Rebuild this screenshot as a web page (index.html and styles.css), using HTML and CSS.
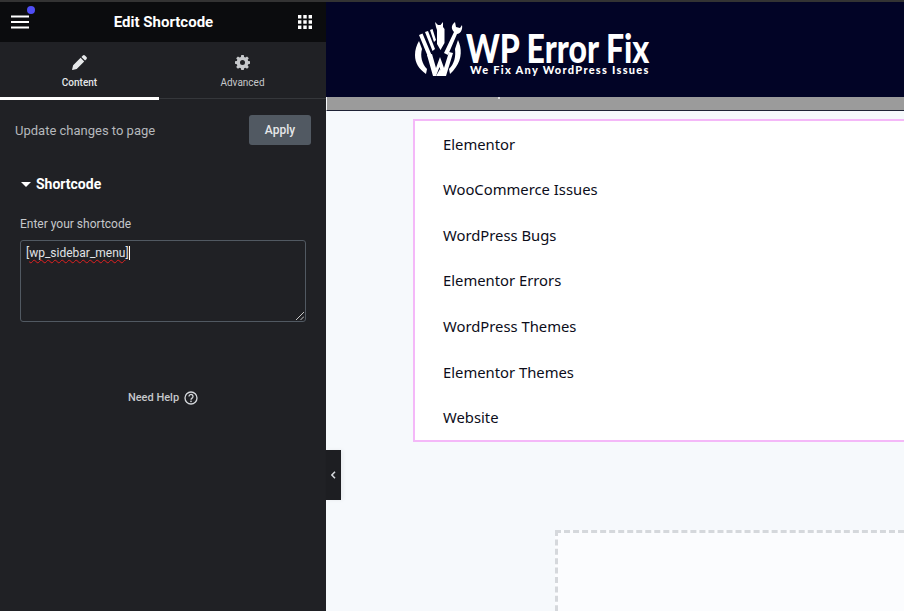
FILE: index.html
```html
<!DOCTYPE html>
<html lang="en">
<head>
<meta charset="utf-8">
<title>Edit Shortcode</title>
<link rel="stylesheet" href="styles.css">
</head>
<body>
<div class="app">
  <aside class="panel">
    <header class="panel-head">
      <button class="head-btn menu-btn" aria-label="Menu">
        <svg width="18" height="14" viewBox="0 0 18 14"><path d="M0 1.500h18M0 7h18M0 12.500h18" stroke="#fff" stroke-width="2"/></svg>
        <span class="dot"></span>
      </button>
      <h1 class="panel-title">Edit Shortcode</h1>
      <button class="head-btn" aria-label="Widgets">
        <svg width="14" height="14" viewBox="0 0 14 14" fill="#fff"><path d="M0 0h3.400v3.400H0zM5.300 0h3.400v3.400H5.300zM10.600 0H14v3.400h-3.400zM0 5.300h3.400v3.400H0zM5.300 5.300h3.400v3.400H5.300zM10.600 5.300H14v3.400h-3.400zM0 10.600h3.400V14H0zM5.300 10.600h3.400V14H5.300zM10.600 10.600H14V14h-3.400z"/></svg>
      </button>
    </header>
    <nav class="tabs">
      <div class="tab tab-active">
        <svg class="tab-icon" width="15" height="15" viewBox="0 0 16 16" fill="#e6e8ea"><path d="M11.600.6a1.600 1.600 0 0 1 2.200 0l1.600 1.600a1.600 1.600 0 0 1 0 2.200l-1.500 1.500-3.800-3.800zM9.200 3 13 6.800 5 14.800.6 15.900a.4.4 0 0 1-.5-.5L1.200 11z"/></svg>
        <span>Content</span>
      </div>
      <div class="tab">
        <svg class="tab-icon" width="15" height="15" viewBox="0 0 24 24" fill="#c6c8cb"><path fill-rule="evenodd" d="M10 0h4l.6 3.200 2 .8L19.300 2.200l2.800 2.800L20.300 7.700l.8 2L24 10v4l-2.900.6-.8 2 1.800 2.700-2.800 2.800-2.700-1.800-2 .8L14 24h-4l-.6-3-2-.8-2.700 1.900-2.800-2.800 1.800-2.700-.8-2L0 14v-4l2.900-.6.8-2L1.900 5l2.800-2.800L7.400 4l2-.8zM12 8a4 4 0 1 0 0 8 4 4 0 0 0 0-8z"/></svg>
        <span>Advanced</span>
      </div>
    </nav>
    <div class="apply-row">
      <span class="apply-text">Update changes to page</span>
      <button class="apply-btn">Apply</button>
    </div>
    <div class="section-head">
      <svg width="10" height="5" viewBox="0 0 10 5" fill="#fff"><path d="M0 0h10L5 5z"/></svg>
      <span>Shortcode</span>
    </div>
    <label class="field-label">Enter your shortcode</label>
    <div class="code-box">
      <span class="code-text"><span class="code-bracket">[</span><span class="code-word">wp_sidebar_menu</span><span class="code-bracket">]</span></span><span class="caret"></span>
      <svg class="grip" width="8" height="8" viewBox="0 0 8 8"><path d="M0 8 8 0M4.500 8 8 4.500" stroke="#c8c8c8" stroke-width="1"/></svg>
    </div>
    <div class="help">
      <span>Need Help</span>
      <svg width="14" height="14" viewBox="0 0 14 14" fill="none"><circle cx="7" cy="7" r="6" stroke="#d5d8dc" stroke-width="1.300"/><path d="M5 5.400a2 2 0 1 1 3.100 1.700c-.7.500-1.100.8-1.100 1.600" stroke="#d5d8dc" stroke-width="1.300"/><circle cx="7" cy="10.400" r=".8" fill="#d5d8dc"/></svg>
    </div>
  </aside>
  <main class="canvas">
    <button class="collapse" aria-label="Collapse">
      <svg width="5" height="8" viewBox="0 0 5 8" fill="none"><path d="M4 .8.900 4 4 7.200" stroke="#d5d8dc" stroke-width="1.500"/></svg>
    </button>
    <section class="site-head">
      <div class="logo">
        <svg class="logo-mark" width="48" height="56" viewBox="0 0 48 56" fill="#fff">
          <path d="M4 13 7.500 11.500 17 34 13.500 36zM10 10 13 9 20 27 17.500 29zM15 8 17.500 7 21 18 19 20z"/>
          <path d="M0 33C0 28 1.500 23 4 19L7 27C5 34 7 42 12 47L11 52C4 47 0 41 0 33z"/>
          <path d="M21 5 20 0 23 3 25.500 3 28 0 28 5 29.500 7 29.500 21 25.500 28 22 22 22 8z"/>
          <path d="M29 31 39 10C36 7 36 3 40 0L41 5 45 6 47 3C48 8 45 12 42 12L33 33z"/>
          <path d="M43 18C47 26 47 37 41 45 39 48 37 50 35 52L34 47C39 42 41 35 40 27z"/>
          <path d="M12 33 17 32 21 46 25 35 29 46 34 30 38 31 31 54 27 54 24.500 45 21 54 18 54z"/>
          <path d="M21 54 28 54 28 52 25 47z"/>
        </svg>
        <div class="logo-text">
          <div class="logo-name">WP Error Fix</div>
          <div class="logo-tag">We Fix Any WordPress Issues</div>
        </div>
      </div>
    </section>
    <div class="grey-bar"><span class="grey-tick"></span></div>
    <ul class="menu-list">
      <li>Elementor</li>
      <li>WooCommerce Issues</li>
      <li>WordPress Bugs</li>
      <li>Elementor Errors</li>
      <li>WordPress Themes</li>
      <li>Elementor Themes</li>
      <li>Website</li>
    </ul>
    <div class="drop-zone"></div>
  </main>
</div>
</body>
</html>
```
FILE: styles.css
```css
* { box-sizing: border-box; }
html, body { margin: 0; height: 100%; overflow: hidden; }
body { background: #f6f9fc; font-family: Roboto, sans-serif; }
button { font-family: inherit; border: 0; padding: 0; background: none; }

.app { display: flex; height: 611px; border-top: 2px solid #333; }

.panel { width: 326px; flex: none; background: #202125; display: flex; flex-direction: column; color: #d5d8dc; }
.panel-head { height: 40px; background: #0b0c0e; display: flex; align-items: center; justify-content: space-between; padding: 0 14px 0 11px; }
.panel-title { margin: 0; font-size: 15px; font-weight: 700; color: #fff; }
.head-btn { display: flex; position: relative; }
.dot { position: absolute; left: 16px; top: -9px; width: 8px; height: 8px; border-radius: 50%; background: #4f4df5; }

.tabs { height: 57px; display: flex; border-bottom: 1px solid #35373b; }
.tab { width: 159px; display: flex; flex-direction: column; align-items: center; padding-top: 13px; font-size: 10px; line-height: 12px; color: #c6c8cb; }
.tab + .tab { width: 167px; }
.tab-icon { margin-bottom: 7px; }
.tab-active { color: #e6e8ea; font-weight: 500; border-bottom: 3px solid #fff; height: 58px; }

.apply-row { display: flex; justify-content: space-between; align-items: center; padding: 16px 15px 0; }
.apply-text { font-size: 13px; color: #b5b8bc; }
.apply-btn { width: 62px; height: 30px; background: #515962; border-radius: 3px; color: #e6e8ea; font-size: 12px; font-weight: 500; }

.section-head { display: flex; align-items: center; gap: 5px; margin: 31px 0 0 21px; font-size: 14px; font-weight: 700; color: #fff; line-height: 16px; }

.field-label { margin: 24px 0 0 20px; font-size: 12px; line-height: 16px; color: #c6c8cb; }

.code-box { position: relative; margin: 8px 20px 0; height: 82px; border: 1px solid #515962; border-radius: 3px; padding: 5px; font-size: 12px; line-height: 15px; color: #e0e2e5; }
.code-word { text-decoration: underline wavy #e02020 1px; text-underline-offset: 2px; }
.caret { display: inline-block; width: 1px; height: 14px; background: #fff; vertical-align: -3px; }
.grip { position: absolute; right: 1px; bottom: 1px; }

.help { display: flex; justify-content: center; align-items: center; gap: 5px; margin-top: 69px; font-size: 11px; font-weight: 500; color: #c6c8cb; line-height: 14px; }

.canvas { flex: 1; min-width: 0; position: relative; background: #f6f9fc; }
.collapse { position: absolute; left: 0; top: 448px; width: 15px; height: 50px; background: #1d1e22; display: flex; align-items: center; justify-content: center; box-shadow: 2px 0 4px rgba(0,0,0,.06); }

.site-head { height: 95px; background: #020426; padding: 20px 0 0 89px; }
.logo { display: flex; align-items: flex-start; }
.logo-mark { flex: none; }
.logo-text { margin: 11px 0 0 3px; color: #fff; font-family: Lato, sans-serif; font-weight: 900; white-space: nowrap; }
.logo-name { font-size: 40px; line-height: 30px; transform: scaleX(.8); transform-origin: left center; }
.logo-tag { font-size: 11px; line-height: 11px; letter-spacing: 1.280px; margin: 1px 0 0 4px; }

.grey-bar { height: 14px; background: #9b9b9b; border-left: 1px solid #f6f9fc; border-bottom: 1px solid #1e2235; position: relative; }
.grey-tick { position: absolute; left: 171px; top: 0; width: 2px; height: 2px; background: #ddd; }

.menu-list { list-style: none; margin: 8px 0 0 87px; padding: .6px 0 0 28px; height: 323px; background: #fff; border: 2px solid #f4b8f8; border-right: 0; font-family: "Noto Sans", sans-serif; font-size: 14.800px; color: #0c0d1a; }
.menu-list li { height: 45.600px; padding-top: 12px; line-height: 20px; }

.drop-zone { margin: 88px 0 0 229px; height: 100px; background: #fbfcfe; border: 3px dashed #d5d8dc; border-right: 0; border-bottom: 0; }
```
